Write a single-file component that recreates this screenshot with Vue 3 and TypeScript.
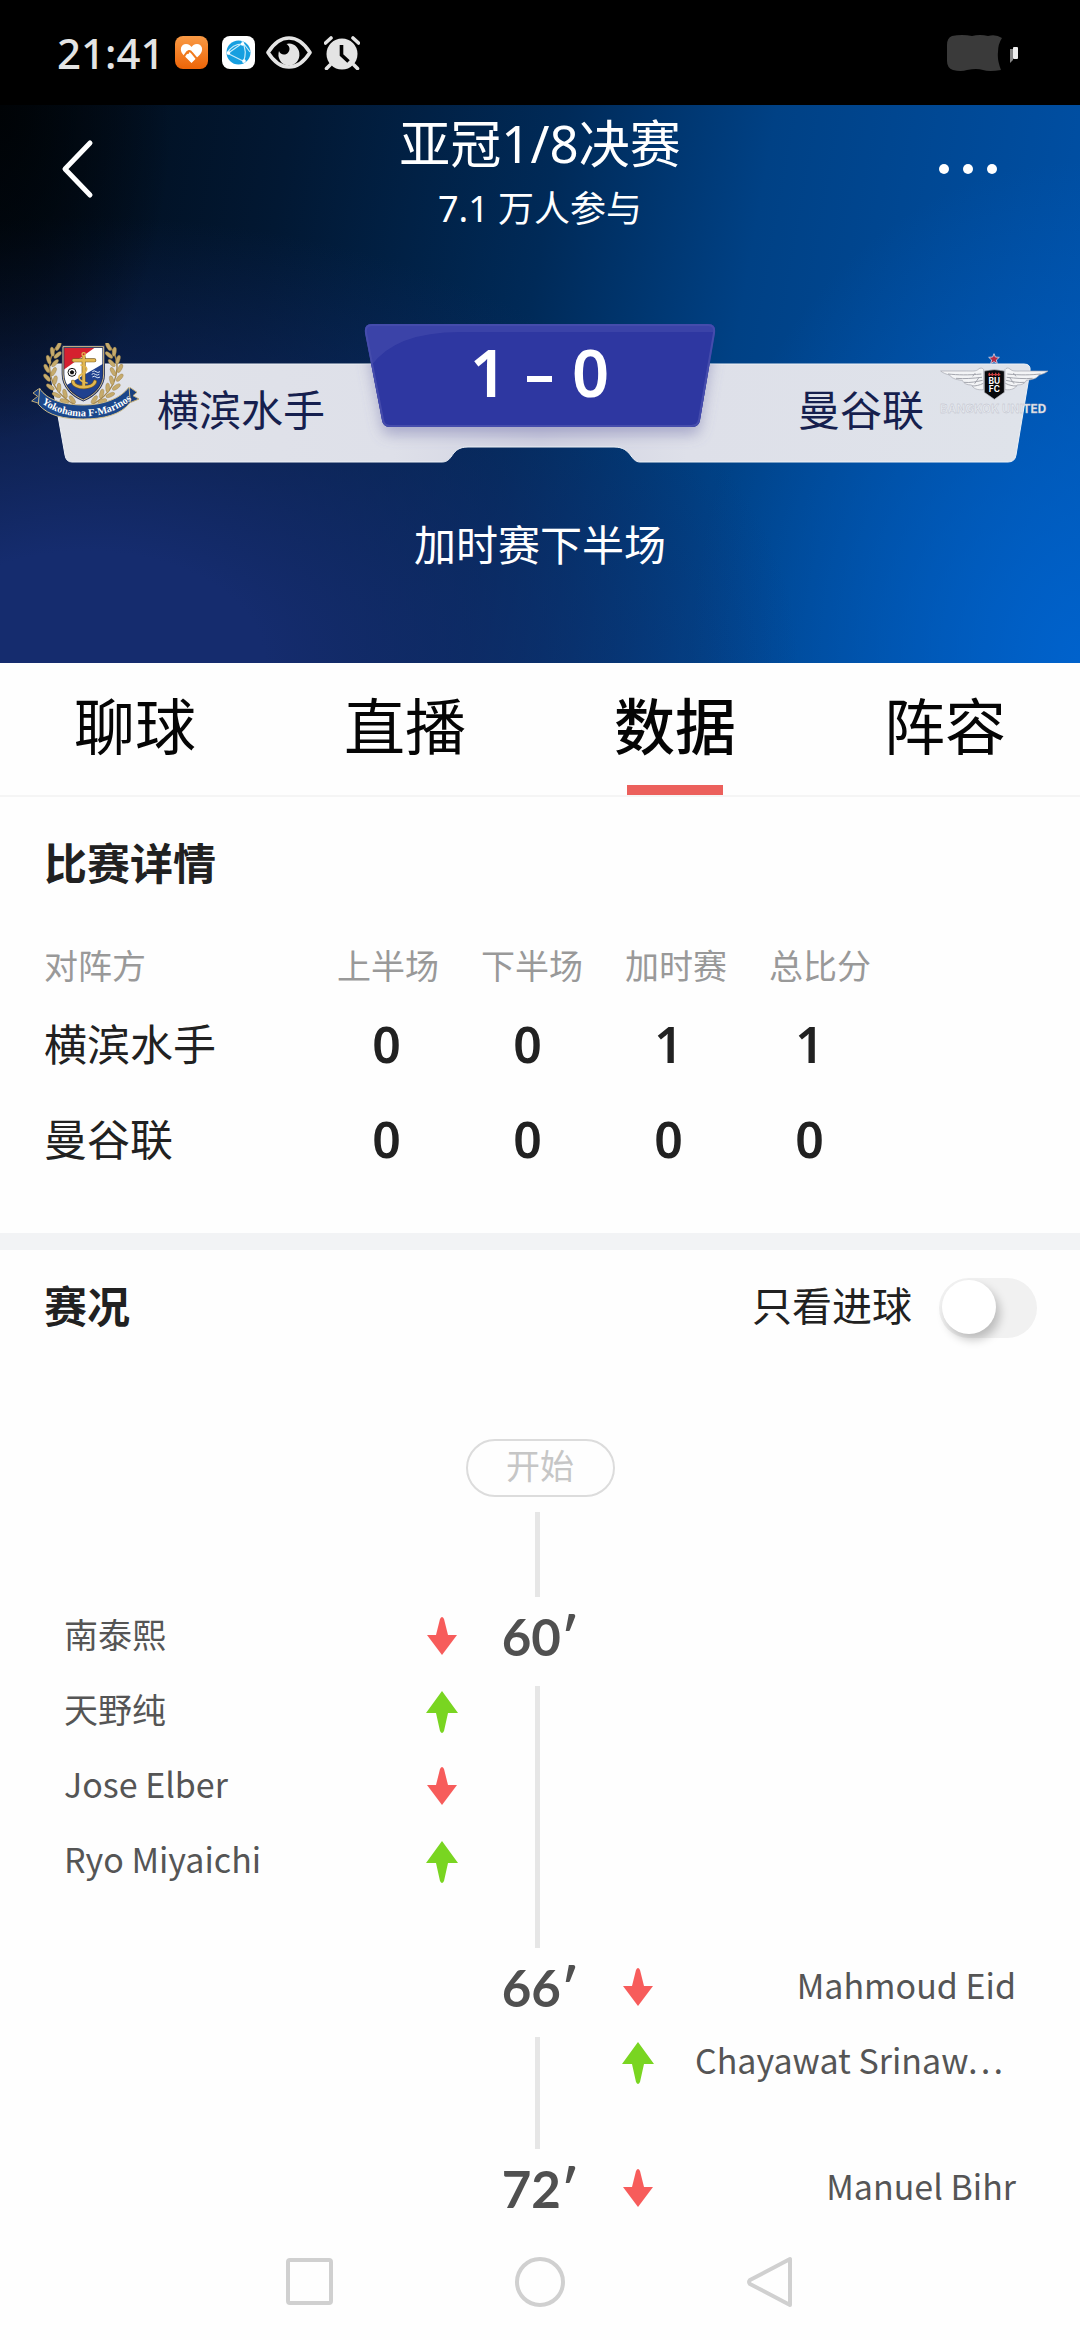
<script setup lang="ts">
import { ref } from 'vue'

type Direction = 'in' | 'out'
interface Substitution { name: string; direction: Direction; truncated?: boolean }
interface MatchEvent { minute: number; side: 'left' | 'right'; players: Substitution[] }
interface Leaf { x: number; y: number; angle: number }

const tabs = ['聊球', '直播', '数据', '阵容']
const activeTab = ref('数据')
const goalsOnly = ref(false)

const periods = ['上半场', '下半场', '加时赛', '总比分']
const results = [
  { team: '横滨水手', scores: [0, 0, 1, 1] },
  { team: '曼谷联', scores: [0, 0, 0, 0] },
]

const events: MatchEvent[] = [
  {
    minute: 60,
    side: 'left',
    players: [
      { name: '南泰熙', direction: 'out' },
      { name: '天野纯', direction: 'in' },
      { name: 'Jose Elber', direction: 'out' },
      { name: 'Ryo Miyaichi', direction: 'in' },
    ],
  },
  {
    minute: 66,
    side: 'right',
    players: [
      { name: 'Mahmoud Eid', direction: 'out' },
      { name: 'Chayawat Srinaw…', direction: 'in', truncated: true },
    ],
  },
  { minute: 72, side: 'right', players: [{ name: 'Manuel Bihr', direction: 'out' }] },
]

const arrowPaths: Record<Direction, string> = {
  out: 'M15 3q2-4 4 0l4 16h9L17 39 2 19h9z',
  in: 'M17 0 33 22H23l-4 18q-2 4-4 0l-4-18H1z',
}

// Laurel leaves of the home crest; the right branch mirrors the left one.
const leaves: Leaf[] = [
  { x: 82, y: 10, angle: 28 }, { x: 64, y: 26, angle: -8 }, { x: 80, y: 36, angle: 50 },
  { x: 53, y: 50, angle: -18 }, { x: 72, y: 60, angle: 42 }, { x: 47, y: 76, angle: -28 },
  { x: 68, y: 86, angle: 28 }, { x: 48, y: 104, angle: -42 }, { x: 72, y: 112, angle: 14 },
  { x: 58, y: 132, angle: -55 }, { x: 84, y: 134, angle: 0 }, { x: 76, y: 156, angle: -66 },
  { x: 102, y: 152, angle: -14 }, { x: 100, y: 174, angle: -74 }, { x: 124, y: 170, angle: -34 },
]
</script>

<template>
  <div class="page">
    <div class="status-bar">
      <span class="clock">21:41</span>
      <svg class="app-icon" viewBox="0 0 33 33">
        <defs>
          <linearGradient id="health" x1="0" y1="0" x2="0" y2="1">
            <stop offset="0" stop-color="#f99a45" />
            <stop offset="1" stop-color="#ee6508" />
          </linearGradient>
        </defs>
        <rect width="33" height="33" rx="8" fill="url(#health)" />
        <path d="M16.500 27 8 18.500C4 14 6 8 11 8c3 0 4.500 1.500 5.500 3C17.500 9.500 19 8 22 8c5 0 7 6 3 10.500z" fill="#fff" />
        <path d="M10 19c3-5 5-5 7-2l5 6M9 21c1-3 3-5 5-4" fill="none" stroke="#f07a1e" stroke-width="2" />
      </svg>
      <svg class="app-icon" viewBox="0 0 33 33">
        <rect width="33" height="33" rx="8" fill="#fff" />
        <circle cx="16.500" cy="16.500" r="12" fill="#169fe0" />
        <path d="M5 18 22 6M5 17l18 9M20 5c4 7 4 15 1 22M5 17C10 9 15 8 20 8M22 8l6 8" fill="none" stroke="#c9ecfb" stroke-width="1.200" />
        <g fill="#fff"><circle cx="20.500" cy="8" r="1.800" /><circle cx="6.500" cy="17" r="1.800" /><circle cx="22" cy="25" r="1.800" /></g>
      </svg>
      <svg class="eye-icon" viewBox="0 0 46 33">
        <path d="M2 16.500C8 7 15 2 23 2s15 5 21 14.500C38 26 31 31 23 31S8 26 2 16.500z" fill="none" stroke="#e4e4e4" stroke-width="3.600" stroke-linejoin="round" />
        <path d="M23 7.500a10.500 11 0 1 1-10 7.500c1 4 7 5 9.500 1 2-3 1-6-2-8z" fill="#e4e4e4" />
      </svg>
      <svg class="alarm-icon" viewBox="0 0 36 34">
        <circle cx="18" cy="18" r="15.500" fill="#e4e4e4" />
        <path d="M6 29 2.500 32.500M30 29l3.500 3.500M1.500 7 7 2M34.500 7 29 2" stroke="#e4e4e4" stroke-width="3.600" stroke-linecap="round" />
        <path d="M17.500 9v10l7 6.500" fill="none" stroke="#000" stroke-width="3.600" />
      </svg>
      <svg class="battery-icon" viewBox="0 0 72 36">
        <path d="M6 1Q1 3 1 10v16q0 7 6 9 8 2 14 0 10-2 16 0 6 2 18 0-4-10-3-18 0-8 4-14-6-4-14-2-8-2-16 0-10-2-20 0z" fill="#3a3a3a" />
        <path d="M64 14h3v11l-3 3z" fill="#888" />
        <rect x="67" y="12" width="5" height="12" rx="1" fill="#eee" />
      </svg>
    </div>

    <header class="hero">
      <div class="title-bar">
        <button class="icon-button" type="button" aria-label="返回">
          <svg viewBox="0 0 34 60" width="34" height="60">
            <path d="M30 4 5 30l25 26" fill="none" stroke="#fff" stroke-width="5" stroke-linecap="round" stroke-linejoin="round" />
          </svg>
        </button>
        <div class="titles">
          <h1>亚冠1/8决赛</h1>
          <p>7.1 万人参与</p>
        </div>
        <button class="icon-button" type="button" aria-label="更多">
          <svg viewBox="0 0 60 12" width="60" height="12" fill="#fff">
            <circle cx="6" cy="6" r="5" /><circle cx="30" cy="6" r="5" /><circle cx="54" cy="6" r="5" />
          </svg>
        </button>
      </div>

      <div class="board">
        <svg class="board-shape" viewBox="0 0 1080 138" preserveAspectRatio="none">
          <defs>
            <linearGradient id="panelShade" x1="0" x2="1" y1="0" y2="0">
              <stop offset="0" stop-color="#e1e3e9" />
              <stop offset="0.350" stop-color="#dee0e9" />
              <stop offset="0.500" stop-color="#d2d3e2" />
              <stop offset="0.650" stop-color="#dee0e9" />
              <stop offset="1" stop-color="#dfe3ea" />
            </linearGradient>
            <filter id="scoreShadow" x="-10%" y="-10%" width="120%" height="140%">
              <feDropShadow dx="0" dy="8" stdDeviation="7" flood-color="#6e70a8" flood-opacity="0.450" />
            </filter>
            <clipPath id="scoreClip"><path d="M372 0h336q8 0 7 8l-15 88q-1 7-8 7H390q-7 0-8-7L365 8q-1-8 7-8z" /></clipPath>
            <clipPath id="panelClip"><path d="M56 40h968q7 0 6 7l-14 84q-1 7-8 7H640c-10 0-8-15-26-15H468c-18 0-14 15-26 15H72q-6 0-7-7L50 47q-1-7 6-7z" /></clipPath>
          </defs>
          <path d="M56 40h968q7 0 6 7l-14 84q-1 7-8 7H640c-10 0-8-15-26-15H468c-18 0-14 15-26 15H72q-6 0-7-7L50 47q-1-7 6-7z" fill="url(#panelShade)" stroke="#edf1f6" stroke-width="1" />
          <g clip-path="url(#panelClip)">
            <path d="M372 0h336q8 0 7 8l-15 88q-1 7-8 7H390q-7 0-8-7L365 8q-1-8 7-8z" fill="#2e37a1" filter="url(#scoreShadow)" />
          </g>
          <g clip-path="url(#scoreClip)">
            <rect x="360" width="360" height="104" fill="#2e37a1" />
            <path d="M360 0h355v8H460q-65 0-89 34z" fill="#4148ab" opacity="0.700" />
          </g>
          <path d="M372 1h336q7 0 6 8l-15 87q-1 6-8 6H390q-6 0-7-6L366 9q-1-8 6-8z" fill="none" stroke="#454cac" stroke-width="2" />
        </svg>

        <div class="team home">
          <svg class="crest" viewBox="0 0 324 234">
            <g v-for="mirror in [false, true]" :key="String(mirror)" :transform="mirror ? 'translate(314 0) scale(-1 1)' : undefined">
              <path d="M76 12C40 60 50 140 130 185" fill="none" stroke="#a5874a" stroke-width="4" />
              <ellipse v-for="(leaf, i) in leaves" :key="i" rx="6" ry="14" fill="#c6ab6c" stroke="#8d723d" stroke-width="1" :transform="`translate(${leaf.x} ${leaf.y}) rotate(${leaf.angle})`" />
            </g>
            <clipPath id="shield"><path d="M96 11h122v82c0 40-32 66-61 78-29-12-61-38-61-78z" /></clipPath>
            <g clip-path="url(#shield)">
              <rect x="90" y="5" width="134" height="170" fill="#fff" />
              <path d="M90 5h114L90 86z" fill="#d5202f" />
              <path d="M224 58 90 136v44h134z" fill="#20418f" />
            </g>
            <path d="M96 11h122v82c0 40-32 66-61 78-29-12-61-38-61-78z" fill="none" stroke="#23305c" stroke-width="8" />
            <path d="M96 11h122v82c0 40-32 66-61 78-29-12-61-38-61-78z" fill="none" stroke="#d8c48c" stroke-width="3" />
            <g fill="none" stroke="#7d5f22" stroke-width="12" stroke-linecap="round">
              <path d="M158 42v88M128 52h62M126 116c4 22 60 22 66 0" />
            </g>
            <g fill="none" stroke="#e2b74f" stroke-width="8" stroke-linecap="round">
              <path d="M158 42v88M128 52h62M126 116c4 22 60 22 66 0" />
              <path d="M150 66c22 4 22 18 4 26s-12 22 14 28" stroke-width="5" />
              <circle cx="158" cy="34" r="5" stroke-width="4" />
            </g>
            <circle cx="123" cy="88" r="12" fill="#fff" stroke="#111" stroke-width="3" />
            <path d="m123 81 7 5-3 8h-8l-3-8z" fill="#111" />
            <path d="M184 86q6-5 11 0t12 0M182 94q6-5 11 0t12 0M184 102q6-5 11 0t12 0" fill="none" stroke="#dce6f5" stroke-width="3" />
            <path d="m22 138-16 12 14 10-18 14 44 14V158zM298 134l20 14-12 10 18 10-44 18v-30z" fill="#193f7f" stroke="#c1ac78" stroke-width="3" />
            <path d="M26 136c20 34 72 50 132 50s112-20 136-54l4 46c-28 38-82 50-140 50S54 220 22 184z" fill="#1b478b" stroke="#d0bd88" stroke-width="3" />
            <path id="ribbonLine" d="M32 180C66 207 108 220 160 220s98-15 150-56" fill="none" />
            <text class="ribbon-text"><textPath href="#ribbonLine">Yokohama F·Marinos</textPath></text>
          </svg>
          <span class="team-name">横滨水手</span>
        </div>

        <div class="score"><span>1</span><i></i><span>0</span></div>

        <div class="team away">
          <span class="team-name">曼谷联</span>
          <svg class="badge" viewBox="0 0 330 186">
            <path d="m168 2 4 10 12 1-9 8 3 11-10-6-10 6 3-11-9-8 12-1z" fill="#b42b45" stroke="#cfd9ee" stroke-width="2.500" />
            <g v-for="mirror in [false, true]" :key="String(mirror)" :transform="mirror ? 'translate(338 0) scale(-1 1)' : undefined">
              <path d="M8 54h78c18 0 28 2 36-6 4-4 12-4 15 2v60c-20 2-32-4-36-14-14 0-24-4-28-14-22-2-34-8-38-16C26 64 14 60 8 54z" fill="#f3f4f6" stroke="#a3a5ad" stroke-width="2" />
              <path d="M30 63c30 3 60 4 100 0M54 76c26 2 50 0 78-3M78 88c20 2 36-2 56-6M102 99c12 0 22-2 34-8M112 60l-8 10M124 72l-14 20" fill="none" stroke="#a4a6ae" stroke-width="3" />
            </g>
            <path d="M139 54q30-8 60 0v64l-30 21-30-21z" fill="#08090b" stroke="#b9bbc2" stroke-width="2" />
            <path d="M151 65h36M154 59v10M163 59v10M173 59v10M182 59v10" stroke="#c63d3c" stroke-width="4" />
            <text class="badge-letters" x="169" y="94">BU</text>
            <text class="badge-letters" x="169" y="118">FC</text>
            <text class="badge-name" x="6" y="180">BANGKOK UNITED</text>
          </svg>
        </div>
      </div>

      <p class="match-state">加时赛下半场</p>
    </header>

    <nav class="tabs">
      <button v-for="tab in tabs" :key="tab" type="button" :class="{ active: tab === activeTab }" @click="activeTab = tab">{{ tab }}</button>
    </nav>

    <section class="details">
      <h2>比赛详情</h2>
      <table>
        <thead>
          <tr><th scope="col">对阵方</th><th v-for="period in periods" :key="period" scope="col">{{ period }}</th></tr>
        </thead>
        <tbody>
          <tr v-for="row in results" :key="row.team">
            <th scope="row">{{ row.team }}</th>
            <td v-for="(value, i) in row.scores" :key="i">{{ value }}</td>
          </tr>
        </tbody>
      </table>
    </section>

    <section class="live">
      <div class="live-head">
        <h2>赛况</h2>
        <label for="goals-only">只看进球</label>
        <input id="goals-only" v-model="goalsOnly" class="toggle" type="checkbox" role="switch">
      </div>
      <div class="start">
        <span class="start-pill">开始</span>
        <i class="line"></i>
      </div>
      <div v-for="event in events" :key="event.minute" class="event" :class="event.side">
        <div class="axis">
          <span class="minute">{{ event.minute }}′</span>
          <i class="line"></i>
        </div>
        <ul>
          <li v-for="player in event.players" :key="player.name">
            <span class="player" :class="{ truncated: player.truncated }">{{ player.name }}</span>
            <svg class="arrow" :class="player.direction" viewBox="0 0 34 42"><path :d="arrowPaths[player.direction]" /></svg>
          </li>
        </ul>
      </div>
    </section>

    <nav class="system-nav">
      <button type="button" aria-label="最近任务"><svg viewBox="0 0 54 54"><rect x="5" y="5" width="43" height="43" rx="2" /></svg></button>
      <button type="button" aria-label="主屏幕"><svg viewBox="0 0 54 54"><circle cx="27" cy="27" r="23" /></svg></button>
      <button type="button" aria-label="返回上一页"><svg viewBox="0 0 54 54"><path d="M47 4v46L7 29q-2-2 0-4z" /></svg></button>
    </nav>
  </div>
</template>

<style>
body {
  margin: 0;
  background: #fefefe;
}
</style>

<style scoped>
* {
  box-sizing: border-box;
}

.page {
  display: flex;
  flex-direction: column;
  min-height: 100vh;
  font-family: "Noto Sans CJK SC", "Noto Sans", sans-serif;
  color: #212121;
}

h1, h2, p, ul {
  margin: 0;
  padding: 0;
}

button {
  padding: 0;
  border: 0;
  background: none;
  font: inherit;
  color: inherit;
}

svg {
  display: block;
}

.clock, .titles, .score, td {
  font-family: "Noto Sans", "Noto Sans CJK SC", sans-serif;
}

.status-bar {
  display: flex;
  align-items: center;
  height: 105px;
  padding: 0 62px 0 57px;
  background: #000;
  color: #e4e4e4;
}

.clock {
  width: 118px;
  font-size: 42px;
  line-height: 60px;
  font-weight: 500;
}

.app-icon {
  width: 33px;
  height: 33px;
  margin-right: 14px;
}

.eye-icon {
  width: 46px;
  height: 33px;
  margin-right: 12px;
  margin-left: -3px;
}

.alarm-icon {
  width: 36px;
  height: 34px;
}

.battery-icon {
  width: 72px;
  height: 36px;
  margin-left: auto;
}

.hero {
  padding: 8px 0 95px;
  color: #fff;
  background:
    radial-gradient(ellipse 16% 60% at 0 0, rgba(0, 2, 4, 0.9), rgba(0, 2, 4, 0) 100%),
    radial-gradient(ellipse 66% 80% at 8% 100%, rgba(21, 44, 110, 1) 25%, rgba(21, 44, 110, 0) 100%),
    radial-gradient(ellipse 36% 90% at 100% 100%, rgba(0, 100, 208, 0.9), rgba(0, 100, 208, 0) 100%),
    linear-gradient(100deg, #010b16 0, #021833 25%, #002a58 48%, #004185 66%, #0052aa 100%);
}

.title-bar {
  display: flex;
  align-items: center;
  justify-content: space-between;
  padding: 0 82px 0 60px;
}

.icon-button {
  display: flex;
  width: 60px;
  margin-bottom: 8px;
}

.titles {
  text-align: center;
  margin-left: 22px;
}

.titles h1 {
  font-size: 51px;
  line-height: 60px;
  font-weight: 400;
}

.titles p {
  margin-top: 12px;
  font-size: 36px;
  line-height: 48px;
}

.board {
  position: relative;
  display: flex;
  height: 138px;
  margin-top: 91px;
}

.board-shape {
  position: absolute;
  inset: 0;
  width: 100%;
  height: 100%;
  overflow: visible;
}

.team, .score {
  position: relative;
  display: flex;
}

.team {
  flex: 1;
}

.home {
  gap: 18px;
  padding-left: 31px;
}

.away {
  gap: 14px;
  justify-content: flex-end;
  padding-right: 32px;
}

.crest {
  width: 108px;
  height: 78px;
  margin-top: 19px;
}

.badge {
  width: 110px;
  height: 62px;
  margin-top: 29px;
  overflow: visible;
}

.ribbon-text {
  font: bold 31px "Liberation Serif", serif;
  fill: #fff;
}

.badge-letters {
  font: 700 25px Inter, sans-serif;
  fill: #fff;
  text-anchor: middle;
}

.badge-name {
  font: 700 35px Inter, sans-serif;
  fill: #e6e9ef;
  stroke: #b8bac6;
  stroke-width: 1;
}

.team-name {
  align-self: flex-end;
  margin-bottom: 24px;
  font-size: 42px;
  line-height: 60px;
  color: #161f4e;
}

.score {
  width: 350px;
  height: 96px;
  align-items: center;
  justify-content: center;
  gap: 20px;
  font-size: 65px;
  line-height: 90px;
  font-weight: 600;
}

.score i {
  width: 25px;
  height: 6px;
  margin-top: 14px;
  background: #fff;
}

.match-state {
  margin-top: 56px;
  font-size: 42px;
  line-height: 50px;
  text-align: center;
}

.tabs {
  display: flex;
  border-bottom: 2px solid #f5f5f5;
}

.tabs button {
  flex: 1;
  display: flex;
  flex-direction: column;
  align-items: center;
  padding-top: 16px;
  font-size: 61px;
  line-height: 90px;
  color: #050505;
}

.tabs button::after {
  content: "";
  width: 96px;
  height: 10px;
  margin-top: 16px;
}

.tabs .active {
  font-weight: 500;
}

.tabs .active::after {
  background: #ec605c;
}

h2 {
  font-size: 43px;
  line-height: 60px;
  font-weight: 700;
}

.details {
  padding: 34px 44px 49px;
  border-bottom: 17px solid #f2f3f5;
}

table {
  display: block;
  margin-top: 45px;
}

thead, tbody {
  display: block;
}

tr {
  display: grid;
  grid-template-columns: 272px repeat(4, 141px);
  align-items: center;
  height: 95px;
}

th, td {
  padding: 0;
  text-align: center;
}

th:first-child {
  text-align: left;
}

thead tr {
  grid-template-columns: 272px repeat(4, 144px);
  height: 58px;
}

thead th {
  font-size: 34px;
  line-height: 50px;
  font-weight: 400;
  color: #999;
}

tbody th {
  font-size: 43px;
  line-height: 60px;
  font-weight: 400;
}

td {
  padding-top: 5px;
  font-size: 50px;
  line-height: 60px;
  font-weight: 600;
}

.live-head {
  display: flex;
  align-items: center;
  height: 60px;
  margin: 28px 43px 0 44px;
}

.live-head h2 {
  flex: 1;
  margin-bottom: 8px;
}

.live-head label {
  margin: 0 27px 8px 0;
  font-size: 40px;
  line-height: 60px;
}

.toggle {
  appearance: none;
  display: flex;
  align-items: flex-start;
  width: 98px;
  height: 60px;
  margin: 0;
  padding: 2px 3px;
  border-radius: 30px;
  background: #f1f1f1;
}

.toggle::before {
  content: "";
  width: 54px;
  height: 54px;
  border-radius: 50%;
  background: #fff;
  box-shadow: 4px 6px 10px rgba(0, 0, 0, 0.22);
}

.toggle:checked {
  justify-content: flex-end;
  background: #ec605c;
}

.start {
  display: flex;
  flex-direction: column;
  align-items: center;
  margin-top: 101px;
}

.start-pill {
  width: 149px;
  height: 58px;
  border: 2px solid #dcdcdc;
  border-radius: 29px;
  font-size: 34px;
  line-height: 48px;
  color: #c6c6c6;
  text-align: center;
}

.line {
  width: 5px;
  margin-right: 5px;
  background: #e6e6e6;
}

.start .line {
  height: 85px;
  margin-top: 15px;
}

.event {
  display: grid;
  grid-template-columns: 1fr 148px 1fr;
}

.axis {
  grid-area: 1 / 2;
  display: flex;
  flex-direction: column;
  align-items: center;
}

.axis .line {
  flex: 1;
}

.event:last-child .line {
  display: none;
}

.minute {
  height: 80px;
  margin-bottom: 9px;
  font-family: Lato, "Noto Sans", sans-serif;
  font-size: 51px;
  line-height: 80px;
  font-weight: 700;
  color: #505050;
}

ul {
  grid-area: 1 / 1;
  padding: 2px 7px 49px 64px;
  list-style: none;
}

.right ul {
  grid-area: 1 / 3;
  padding: 2px 64px 49px 7px;
}

.event:last-child ul {
  padding-bottom: 0;
}

li {
  display: flex;
  align-items: center;
  height: 75px;
}

.right li {
  flex-direction: row-reverse;
}

.player {
  flex: 1;
  margin-bottom: 6px;
  font-size: 34px;
  line-height: 50px;
  color: #555;
  white-space: nowrap;
}

.right .player {
  margin-left: 40px;
  text-align: right;
}

.right .truncated {
  text-align: left;
}

.arrow {
  width: 34px;
  height: 42px;
  fill: #f75c5b;
}

.arrow.in {
  fill: #79d521;
}

.system-nav {
  display: flex;
  justify-content: center;
  align-items: center;
  gap: 176px;
  height: 101px;
  margin-top: auto;
  padding-bottom: 15px;
}

.system-nav svg {
  width: 54px;
  height: 54px;
  fill: none;
  stroke: #d0d0d0;
  stroke-width: 4;
  stroke-linejoin: round;
}
</style>
